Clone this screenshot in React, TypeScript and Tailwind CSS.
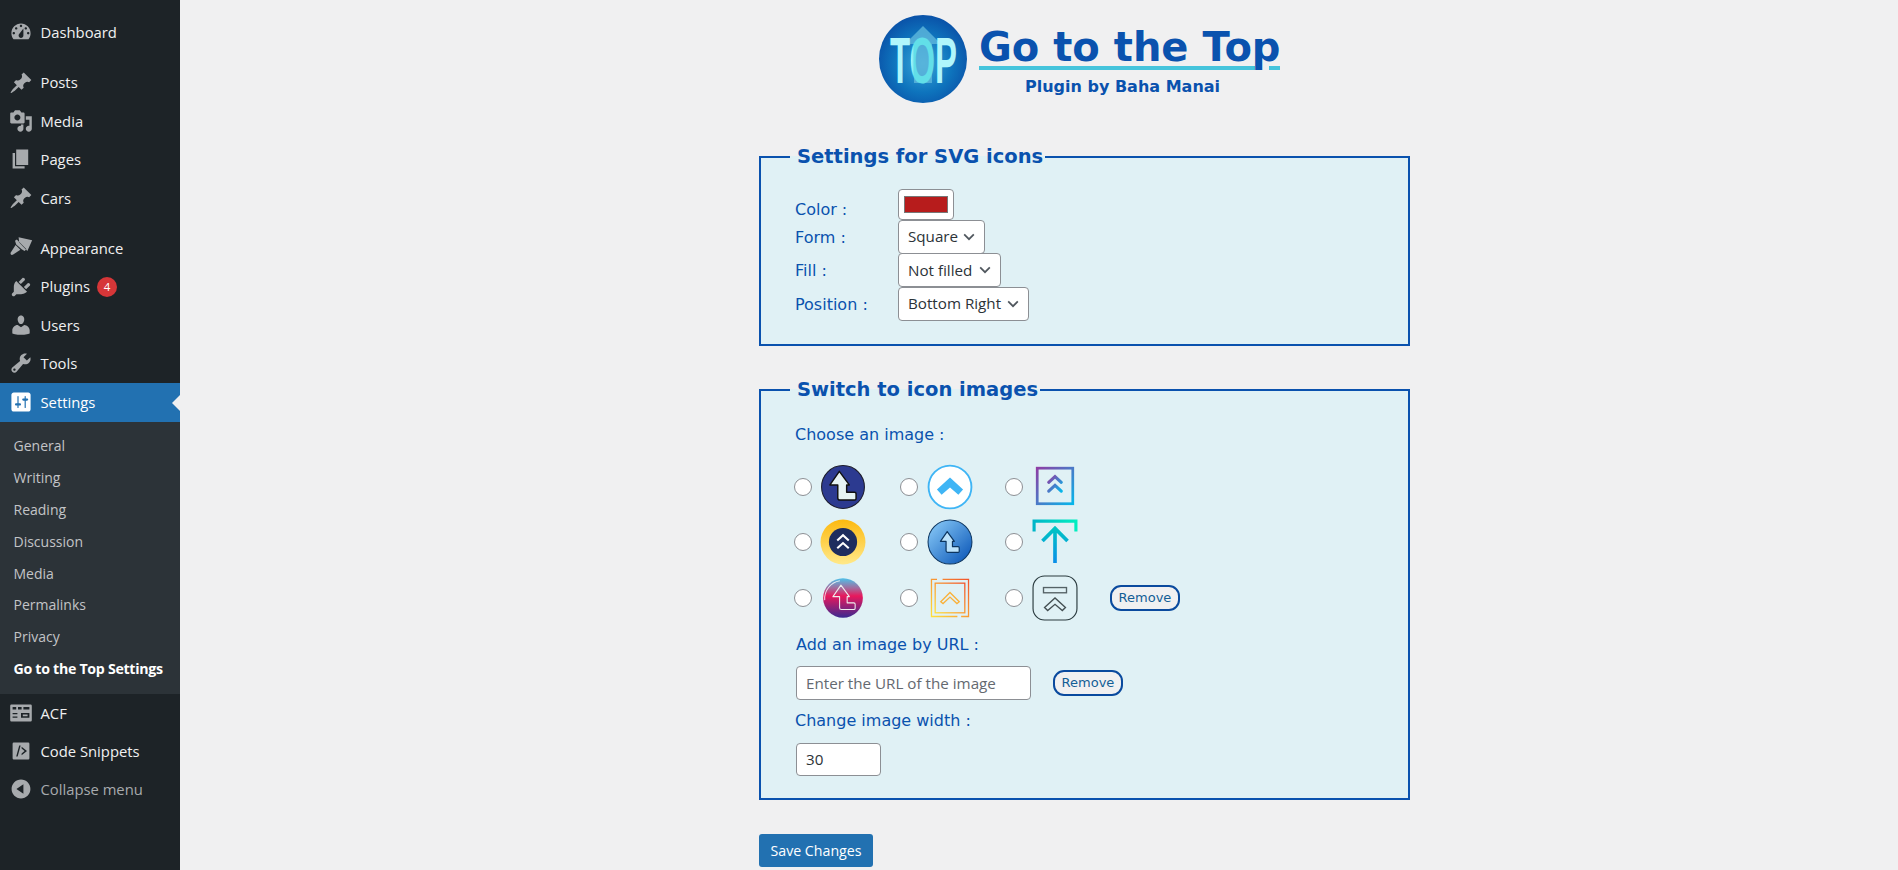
import type { ReactNode } from 'react'

const PATHS: Record<string, string> = {
  dashboard: 'M3.76 16h12.48c1.1-1.37 1.76-3.11 1.76-5 0-4.42-3.58-8-8-8s-8 3.58-8 8c0 1.89.66 3.63 1.76 5zM10 4c.55 0 1 .45 1 1s-.45 1-1 1-1-.45-1-1 .45-1 1-1zM6 6c.55 0 1 .45 1 1s-.45 1-1 1-1-.45-1-1 .45-1 1-1zm8 0c.55 0 1 .45 1 1s-.45 1-1 1-1-.45-1-1 .45-1 1-1zm-5.37 5.55L12 7v6c0 1.1-.9 2-2 2s-2-.9-2-2c0-.57.24-1.08.63-1.45zM4 10c.55 0 1 .45 1 1s-.45 1-1 1-1-.45-1-1 .45-1 1-1zm12 0c.55 0 1 .45 1 1s-.45 1-1 1-1-.45-1-1 .45-1 1-1z',
  pin: 'M10.44 3.02l1.82-1.82 6.36 6.35-1.83 1.82c-1.05-.68-2.48-.57-3.41.36l-.75.75c-.92.93-1.04 2.35-.35 3.41l-1.83 1.82-2.41-2.41-2.8 2.79c-.42.42-3.38 2.71-3.8 2.29s1.86-3.39 2.28-3.81l2.79-2.79L4.1 9.36l1.83-1.82c1.05.69 2.48.57 3.4-.36l.75-.75c.93-.92 1.05-2.35.36-3.41z',
  media: 'M13 11V4c0-.55-.45-1-1-1h-1.67L9 1H5L3.67 3H2c-.55 0-1 .45-1 1v7c0 .55.45 1 1 1h10c.55 0 1-.45 1-1zM7 4.5c1.38 0 2.5 1.12 2.5 2.5S8.38 9.5 7 9.5 4.5 8.38 4.5 7 5.62 4.5 7 4.5zM14 6h5v10.5c0 1.38-1.12 2.5-2.5 2.5S14 17.88 14 16.5s1.12-2.5 2.5-2.5c.17 0 .34.02.5.05V9h-3V6zm-4 8.05V13h2v3.5c0 1.38-1.12 2.5-2.5 2.5S7 17.88 7 16.5 8.12 14 9.5 14c.17 0 .34.02.5.05z',
  pages: 'M6 15V2h10v13H6zm-1 1h8v2H3V5h2v11z',
  appearance: 'M8 1 L19.300 3.500 L15.300 12.500 L8.500 5.500 Z M5 4 L6.500 3 L14.500 11 L13 12.500 L10.500 11 L6 7 Z M5.500 7.500 L9.500 11.500 L3.500 15.500 Q2 16.200 1.300 15 Q1 14 2 13 Z',
  plugins: 'M13.11 4.36L9.87 7.6 8 5.73l3.24-3.24c.35-.34 1.05-.2 1.56.32.52.51.66 1.21.31 1.55zm-8 1.77l.91-1.12 9.01 9.01-1.19.84c-.71.71-2.63 1.16-3.82 1.16H6.14L4.9 17.26c-.59.59-1.54.59-2.12 0-.59-.58-.59-1.53 0-2.12l1.24-1.24v-3.88c0-1.13.4-3.19 1.09-3.89zm7.26 3.97l3.24-3.24c.34-.35 1.04-.21 1.55.31.52.51.66 1.21.31 1.55l-3.24 3.25z',
  users: 'M10 9.25c-2.27 0-2.73-3.44-2.73-3.44C7 4.02 7.82 2 9.97 2c2.16 0 2.98 2.02 2.71 3.81 0 0-.41 3.44-2.68 3.44zm0 2.57L12.72 10c2.39 0 4.52 2.33 4.52 4.53v2.49s-3.65 1.13-7.24 1.13c-3.65 0-7.24-1.13-7.24-1.13v-2.49c0-2.25 1.94-4.48 4.47-4.48z',
  tools: 'M16.68 9.77c-1.34 1.34-3.3 1.67-4.95.99l-5.41 6.52c-.99.99-2.59.99-3.58 0s-.99-2.59 0-3.57l6.52-5.42c-.68-1.65-.35-3.61.99-4.95 1.28-1.28 3.12-1.62 4.72-1.06l-2.89 2.89 2.82 2.82 2.86-2.87c.53 1.58.18 3.39-1.08 4.65zM3.81 16.21c.4.39 1.04.39 1.43 0 .4-.4.4-1.04 0-1.43-.39-.4-1.03-.4-1.43 0-.39.39-.39 1.03 0 1.43z',
  settings: 'M18 16V4c0-1.1-.9-2-2-2H4c-1.1 0-2 .9-2 2v12c0 1.1.9 2 2 2h12c1.1 0 2-.9 2-2zM8 11h1c.55 0 1 .45 1 1s-.45 1-1 1H8v1.5c0 .28-.22.5-.5.5s-.5-.22-.5-.5V13H6c-.55 0-1-.45-1-1s.45-1 1-1h1V5.5c0-.28.22-.5.5-.5s.5.22.5.5V11zm5-2h-1c-.55 0-1-.45-1-1s.45-1 1-1h1V5.5c0-.28.22-.5.5-.5s.5.22.5.5V7h1c.55 0 1 .45 1 1s-.45 1-1 1h-1v5.5c0 .28-.22.5-.5.5s-.5-.22-.5-.5V9z',
  acf: 'M2 3h16a1 1 0 0 1 1 1v12a1 1 0 0 1-1 1H2a1 1 0 0 1-1-1V4a1 1 0 0 1 1-1zm1 2v2h3V5H3zm4.500 0v2h3V5h-3zM12 5v2h5V5h-5zM3 10v1h4v-1H3zm0 3v1h4v-1H3zm7-3v4h7v-4h-7zm1.500 1.200h4v1.600h-4v-1.600z',
  code: 'M4 3h12a1 1 0 0 1 1 1v12a1 1 0 0 1-1 1H4a1 1 0 0 1-1-1V4a1 1 0 0 1 1-1zM6 14.500 L8.500 5.500 H9.700 L7.200 14.500 Z M10.500 6.500 L15 10 L10.500 13.500 V12 L13 10 L10.500 8 Z',
  collapse: 'M10 2.160c4.330 0 7.840 3.510 7.840 7.840s-3.510 7.840-7.840 7.840S2.160 14.330 2.160 10 5.710 2.160 10 2.160zm2 11.720V6.120L6.180 9.970z',
}

const FONT_UI = 'font-["Open_Sans",sans-serif]'
const COMIC = 'font-["DejaVu_Sans",sans-serif]'

function MenuIcon({ name, color = '#a7aaad' }: { name: string; color?: string }) {
  return (
    <svg viewBox="0 0 20 20" className="w-6 h-6 shrink-0" fill={color} fillRule="evenodd">
      <path d={PATHS[name]} />
    </svg>
  )
}

function MenuRow({ icon, label, badge, muted }: { icon: string; label: string; badge?: string; muted?: boolean }) {
  return (
    <div className={`h-[38.4px] flex items-center pl-[8.5px] gap-[8px] text-[14.8px] ${muted ? 'text-[#a7aaad]' : 'text-[#f0f0f1]'}`}>
      <MenuIcon name={icon} />
      <span>{label}</span>
      {badge && (
        <span className="w-5 h-5 -ml-px rounded-full bg-[#d63638] text-white text-[11.5px] flex items-center justify-center">{badge}</span>
      )}
    </div>
  )
}

const SUBMENU = ['General', 'Writing', 'Reading', 'Discussion', 'Media', 'Permalinks', 'Privacy']

function Sidebar() {
  return (
    <aside className={`w-[180px] shrink-0 bg-[#1d2327] h-full pt-[13px] ${FONT_UI}`}>
      <MenuRow icon="dashboard" label="Dashboard" />
      <div className="h-3" />
      <MenuRow icon="pin" label="Posts" />
      <MenuRow icon="media" label="Media" />
      <MenuRow icon="pages" label="Pages" />
      <MenuRow icon="pin" label="Cars" />
      <div className="h-3" />
      <MenuRow icon="appearance" label="Appearance" />
      <MenuRow icon="plugins" label="Plugins" badge="4" />
      <MenuRow icon="users" label="Users" />
      <MenuRow icon="tools" label="Tools" />
      <div className="relative h-[39.5px] bg-[#2271b1] text-white flex items-center pl-[8.5px] gap-[8px] text-[14.8px]">
        <MenuIcon name="settings" color="#ffffff" />
        <span>Settings</span>
        <span className="absolute right-0 top-[12px] border-y-[8px] border-r-[8px] border-y-transparent border-r-[#f0f0f1]" />
      </div>
      <div className="bg-[#2c3338] h-[271.5px] pt-[8px] text-[14px] text-[#c3c4c7]">
        {SUBMENU.map(item => (
          <div key={item} className="h-[31.8px] flex items-center pl-[13.500px]">{item}</div>
        ))}
        <div className="h-[31.8px] flex items-center pl-[13.500px] text-[14.2px] text-white font-bold tracking-[-0.3px]">Go to the Top Settings</div>
      </div>
      <MenuRow icon="acf" label="ACF" />
      <MenuRow icon="code" label="Code Snippets" />
      <MenuRow icon="collapse" label="Collapse menu" muted />
    </aside>
  )
}

function Logo() {
  return (
    <svg viewBox="0 0 88 88" className="w-[88px] h-[88px] shrink-0">
      <defs>
        <radialGradient id="logoBg" cx="50%" cy="55%" r="55%">
          <stop offset="0%" stopColor="#3aa6d8" />
          <stop offset="60%" stopColor="#0e74bd" />
          <stop offset="100%" stopColor="#0a52a8" />
        </radialGradient>
        <linearGradient id="logoText" gradientUnits="userSpaceOnUse" x1="11" y1="0" x2="78" y2="0">
          <stop offset="32%" stopColor="#b0f6fb" />
          <stop offset="36%" stopColor="#62dfe8" />
          <stop offset="66%" stopColor="#62dfe8" />
          <stop offset="70%" stopColor="#b0f6fb" />
        </linearGradient>
      </defs>
      <circle cx="44" cy="44" r="44" fill="url(#logoBg)" />
      <path d="M26 29 L44 11 L62 29 L53 29 L53 68 L35 68 L35 29 Z" fill="#5fb8dc" opacity="0.8" />
      <text x="11" y="68" fontSize="65" fontWeight="700" fontFamily="Liberation Sans, sans-serif" textLength="67" lengthAdjust="spacingAndGlyphs" fill="url(#logoText)">TOP</text>
    </svg>
  )
}

function Header() {
  return (
    <header className="ml-[120px] h-[143px] flex items-start pt-[15px] gap-3 shrink-0">
      <Logo />
      <div className={`w-[301px] text-[#0a52ae] ${COMIC}`}>
        <div className="relative h-[55px]">
          <div className="text-[40px] font-bold leading-[51px] pt-[7px] whitespace-nowrap relative z-10">Go to the Top</div>
          <div className="absolute left-0 right-0 top-[51px] h-[4px] flex justify-between">
            <div className="w-[276px] bg-[#45c4dc]" />
            <div className="w-[11px] bg-[#45c4dc]" />
          </div>
        </div>
        <div className="mt-[3px] pr-[14px] text-center text-[16px] font-bold leading-[28px]">Plugin by Baha Manai</div>
      </div>
    </header>
  )
}

function Panel({ title, children, className }: { title: string; children: ReactNode; className: string }) {
  return (
    <fieldset className={`w-[651px] border-2 border-[#0a52ae] bg-[#e0f1f5] pl-[34px] ${className}`}>
      <legend className={`ml-[-5px] pl-[7px] pr-[2px] text-[#0a52ae] text-[19.5px] font-bold leading-[27px] ${COMIC}`}>{title}</legend>
      {children}
    </fieldset>
  )
}

function FieldLabel({ children, className = '' }: { children: ReactNode; className?: string }) {
  return <div className={`text-[#0a52ae] text-[16px] leading-[24px] whitespace-nowrap ${COMIC} ${className}`}>{children}</div>
}

function SelectBox({ value, width }: { value: string; width: string }) {
  return (
    <div className={`${width} h-[34px] bg-white border border-[#8c8f94] rounded-[4px] flex items-center justify-between pl-[9px] pr-[8px] text-[15.2px] text-[#2c3338] ${FONT_UI}`}>
      <span className="whitespace-nowrap">{value}</span>
      <svg viewBox="0 0 16 16" className="w-[14px] h-[14px] shrink-0" fill="none" stroke="#50575e" strokeWidth="2">
        <path d="M2.500 5 L8 10.500 L13.500 5" />
      </svg>
    </div>
  )
}

function Radio() {
  return <input type="radio" className="appearance-none w-[18px] h-[18px] shrink-0 rounded-full bg-white border border-[#8c8f94]" />
}

function RemoveBtn() {
  return (
    <button className={`w-[70px] h-[26px] rounded-[11px] border-2 border-[#0a4a9e] bg-[#f0f0f1] text-[#135e96] text-[13px] leading-[20px] ${COMIC}`}>Remove</button>
  )
}

function ArrowL({ stroke, fill, w = 1.4 }: { stroke: string; fill: string; w?: number }) {
  return <path d="M9.500 20 L18.500 7 L28 20 H25.500 V27 H33 Q34.500 27 34.500 28.500 V33 Q34.500 34.500 33 34.500 H19 Q17 34.500 17 32.500 V20 Z" fill={fill} stroke={stroke} strokeWidth={w} strokeLinejoin="round" />
}

// the nine sample images of the picker, all 44x44
function Thumb({ n }: { n: number }) {
  const box = 'w-[46px] h-[46px] shrink-0'
  switch (n) {
    case 0:
      return (
        <svg viewBox="0 0 44 44" className={box}>
          <circle cx="22" cy="22" r="20.500" fill="#2c3a90" stroke="#1c1c2a" />
          <ArrowL stroke="#111" fill="#e6f3f3" />
        </svg>
      )
    case 1:
      return (
        <svg viewBox="0 0 44 44" className={box}>
          <circle cx="22" cy="22" r="20.500" fill="#fff" stroke="#3fb5f5" strokeWidth="1.800" />
          <path d="M9.500 24.500 L22 13 L34.500 24.500 L30 29.500 L22 22.500 L14 29.500 Z" fill="#3fb5f5" />
        </svg>
      )
    case 2:
      return (
        <svg viewBox="0 0 44 44" className={box}>
          <defs>
            <linearGradient id="t2" x1="0" y1="0" x2="1" y2="1"><stop offset="0%" stopColor="#8e3ea5" /><stop offset="100%" stopColor="#06b6ea" /></linearGradient>
          </defs>
          <rect x="5" y="4" width="34" height="34" fill="none" stroke="url(#t2)" strokeWidth="2.600" />
          <path d="M16 17.500 L22 12 L28 17.500 M16 26 L22 20.500 L28 26" fill="none" stroke="url(#t2)" strokeWidth="3" strokeLinecap="round" />
        </svg>
      )
    case 3:
      return (
        <svg viewBox="0 0 44 44" className={box}>
          <defs>
            <linearGradient id="t3" x1="0" y1="0" x2="0" y2="1"><stop offset="0%" stopColor="#fdb90f" /><stop offset="100%" stopColor="#ffe98a" /></linearGradient>
          </defs>
          <circle cx="22" cy="22" r="21.500" fill="url(#t3)" />
          <circle cx="22" cy="22" r="13.500" fill="#1e2d5e" />
          <path d="M16.500 20.500 L22 15.500 L27.500 20.500 M16.500 28 L22 23 L27.500 28" fill="none" stroke="#fff" strokeWidth="2" />
        </svg>
      )
    case 4:
      return (
        <svg viewBox="0 0 44 44" className={box}>
          <defs>
            <linearGradient id="t4" x1="0" y1="0" x2="1" y2="1"><stop offset="0%" stopColor="#8fd0fb" /><stop offset="100%" stopColor="#0450b4" /></linearGradient>
          </defs>
          <circle cx="22" cy="22" r="21" fill="url(#t4)" stroke="#0c3560" />
          <g transform="translate(6,7) scale(0.72)"><ArrowL stroke="#0c3560" fill="#bde3fb" w={1.600} /></g>
        </svg>
      )
    case 5:
      return (
        <svg viewBox="0 0 44 44" className={box}>
          <defs>
            <linearGradient id="t5" x1="0" y1="0" x2="1" y2="0"><stop offset="0%" stopColor="#00b6c8" /><stop offset="100%" stopColor="#00eec0" /></linearGradient>
            <linearGradient id="t5b" x1="0" y1="0" x2="0" y2="1"><stop offset="0%" stopColor="#00c4c4" /><stop offset="100%" stopColor="#0a8ee8" /></linearGradient>
          </defs>
          <path d="M2 12 V2 H42 V12" fill="none" stroke="url(#t5)" strokeWidth="3" />
          <path d="M22 9 V42 M10 21 L22 9 L34 21" fill="none" stroke="url(#t5b)" strokeWidth="3.500" />
        </svg>
      )
    case 6:
      return (
        <svg viewBox="0 0 44 44" className={box}>
          <defs>
            <linearGradient id="t6" x1="0" y1="0" x2="0" y2="1">
              <stop offset="0%" stopColor="#4cc2ea" /><stop offset="25%" stopColor="#a36c9e" /><stop offset="45%" stopColor="#e8185c" /><stop offset="100%" stopColor="#3a2a92" />
            </linearGradient>
          </defs>
          <circle cx="22" cy="22" r="19" fill="url(#t6)" />
          <path d="M4.500 24 A17.500 17.500 0 0 1 19 5.500" fill="none" stroke="#fff" strokeWidth="1" opacity="0.8" />
          <g transform="translate(4.300,3.700) scale(0.85)"><ArrowL stroke="#eee" fill="none" w={1.200} /></g>
        </svg>
      )
    case 7:
      return (
        <svg viewBox="0 0 44 44" className={box}>
          <defs>
            <linearGradient id="t7" x1="0" y1="1" x2="1" y2="0"><stop offset="0%" stopColor="#ffe03a" /><stop offset="100%" stopColor="#f2552c" /></linearGradient>
          </defs>
          <g transform="translate(2.500,2.500) scale(0.886)">
            <path d="M8 2 H2 V42 H30 M14 2 H42 V42 H34" fill="none" stroke="url(#t7)" strokeWidth="1.400" />
            <rect x="6" y="6" width="32" height="32" fill="none" stroke="url(#t7)" strokeWidth="1.400" />
            <path d="M12 26 L22 16 L32 26 L29.500 28 L22 21 L14.500 28 Z" fill="none" stroke="#f9b13a" strokeWidth="1.400" />
          </g>
        </svg>
      )
    default:
      return (
        <svg viewBox="0 0 44 44" className={box}>
          <rect x="1" y="1" width="42" height="42" rx="11" fill="none" stroke="#2a3a3e" strokeWidth="1.100" />
          <rect x="11" y="12" width="22" height="5" fill="none" stroke="#556266" strokeWidth="1.300" />
          <path d="M12 31 L22 22 L32 31 L29 34 L22 28 L15 34 Z" fill="none" stroke="#444f52" strokeWidth="1.300" />
        </svg>
      )
  }
}

function ImageGrid() {
  const rows = [
    { h: 'h-[55px]', cells: [0, 1, 2] },
    { h: 'h-[56.5px]', cells: [3, 4, 5] },
    { h: 'h-[55px]', cells: [6, 7, 8] },
  ]
  return (
    <div className="flex flex-col mt-[12px]">
      {rows.map((row, r) => (
        <div key={r} className={`${row.h} flex items-center`}>
          <div className="w-[105px] -ml-px mr-px flex items-center gap-[8px]">
            <Radio />
            <Thumb n={row.cells[0]} />
          </div>
          <div className="w-[105px] flex items-center gap-[9px]">
            <Radio />
            <Thumb n={row.cells[1]} />
          </div>
          <div className="w-[105px] flex items-center gap-[9px]">
            <Radio />
            <Thumb n={row.cells[2]} />
          </div>
          {r === 2 && <RemoveBtn />}
        </div>
      ))}
    </div>
  )
}

function SvgSettings() {
  return (
    <Panel title="Settings for SVG icons" className="h-[203px]">
      <div className="flex flex-col mt-[19px]">
        <div className="h-[31px] flex items-center gap-0">
          <FieldLabel className="w-[103px] pt-[11px]">Color :</FieldLabel>
          <div className="w-[56px] h-[31px] bg-white border border-[#8c8f94] rounded-[4px] p-[5px] pt-[6px]">
            <div className="h-[17px] bg-[#b71c1c] border border-[#777]" />
          </div>
        </div>
        <div className="h-[33.500px] flex items-center">
          <FieldLabel className="w-[103px] pt-[2px]">Form :</FieldLabel>
          <SelectBox value="Square" width="w-[87px]" />
        </div>
        <div className="h-[33.500px] flex items-center">
          <FieldLabel className="w-[103px] pt-[2px]">Fill :</FieldLabel>
          <SelectBox value="Not filled" width="w-[103px]" />
        </div>
        <div className="h-[33.500px] flex items-center">
          <FieldLabel className="w-[103px] pt-[2px]">Position :</FieldLabel>
          <SelectBox value="Bottom Right" width="w-[131px]" />
        </div>
      </div>
    </Panel>
  )
}

function ImageSettings() {
  return (
    <Panel title="Switch to icon images" className="h-[424px] mt-[30px]">
      <FieldLabel className="mt-[20px]">Choose an image :</FieldLabel>
      <ImageGrid />
      <FieldLabel className="mt-[7px] ml-px">Add an image by URL :</FieldLabel>
      <div className="flex items-center mt-[9px]">
        <input placeholder="Enter the URL of the image" className={`ml-px w-[235px] h-[34px] bg-white border border-[#8c8f94] rounded-[4px] px-[9px] text-[15.2px] text-[#2c3338] placeholder:text-[#646970] ${FONT_UI}`} />
        <div className="ml-[22px]"><RemoveBtn /></div>
      </div>
      <FieldLabel className="mt-[9px]">Change image width :</FieldLabel>
      <input readOnly value="30" className={`ml-px mt-[10px] block w-[85px] h-[33px] bg-white border border-[#8c8f94] rounded-[4px] px-[9px] text-[15.2px] text-[#2c3338] ${FONT_UI}`} />
    </Panel>
  )
}

export default function App() {
  return (
    <div className="w-[1898px] h-[870px] flex overflow-hidden bg-[#f0f0f1]">
      <Sidebar />
      <main className="ml-[579px] w-[652px] flex flex-col">
        <Header />
        <SvgSettings />
        <ImageSettings />
        <button className={`mt-[34px] w-[114px] h-[33px] shrink-0 bg-[#2271b1] rounded-[3px] text-white text-[14.2px] ${FONT_UI}`}>Save Changes</button>
      </main>
    </div>
  )
}
